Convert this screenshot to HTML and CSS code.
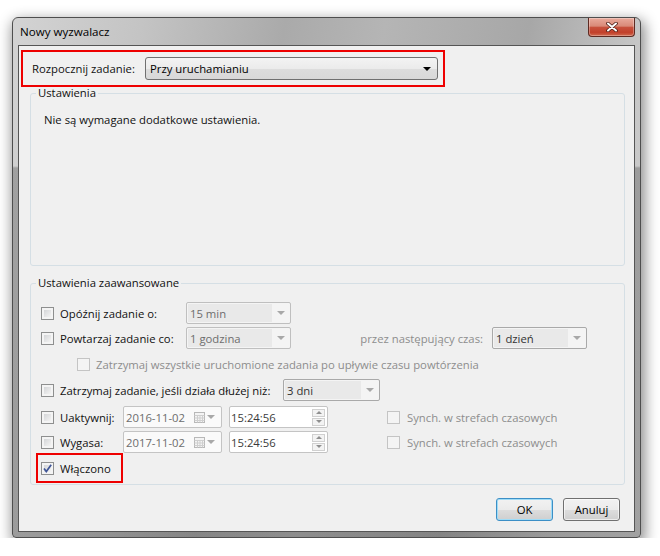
FILE: index.html
```html
<!DOCTYPE html>
<html lang="pl">
<head>
    <meta charset="UTF-8">
    <title>Nowy wyzwalacz</title>
    <link rel="stylesheet" href="styles.css">
</head>
<body>
    <div class="window">
        <div class="titlebar">
            <span class="title">Nowy wyzwalacz</span>
            <button class="close" type="button">
                <svg width="12" height="10" viewBox="0 0 12 10">
                    <path d="M2 1.5 L10 8.5 M10 1.5 L2 8.5" stroke="#4a1c14" stroke-width="3.6" stroke-linecap="round"/>
                    <path d="M2 1.5 L10 8.5 M10 1.5 L2 8.5" stroke="#ffffff" stroke-width="2" stroke-linecap="round"/>
                </svg>
            </button>
        </div>

        <div class="client">
            <div class="start mark">
                <label class="start-label">Rozpocznij zadanie:</label>
                <div class="select">
                    <span class="select-val">Przy uruchamianiu</span>
                    <span class="caret"></span>
                </div>
            </div>

            <fieldset class="group group-basic">
                <legend>Ustawienia</legend>
                <p class="note">Nie są wymagane dodatkowe ustawienia.</p>
            </fieldset>

            <fieldset class="group group-adv">
                <legend>Ustawienia zaawansowane</legend>
                <div class="rows">
                    <div class="row">
                        <span class="cb"></span>
                        <span class="lbl w126">Opóźnij zadanie o:</span>
                        <div class="combo w105"><span class="val">15 min</span><span class="drop"></span></div>
                    </div>
                    <div class="row gap3">
                        <span class="cb"></span>
                        <span class="lbl w126">Powtarzaj zadanie co:</span>
                        <div class="combo w105"><span class="val">1 godzina</span><span class="drop"></span></div>
                        <span class="side off">przez następujący czas:</span>
                        <div class="combo w95 dark"><span class="val">1 dzień</span><span class="drop"></span></div>
                    </div>
                    <div class="row sub gap5">
                        <span class="cb off"></span>
                        <span class="lbl off">Zatrzymaj wszystkie uruchomione zadania po upływie czasu powtórzenia</span>
                    </div>
                    <div class="row gap5">
                        <span class="cb"></span>
                        <span class="lbl w223">Zatrzymaj zadanie, jeśli działa dłużej niż:</span>
                        <div class="combo w97 dark"><span class="val">3 dni</span><span class="drop"></span></div>
                    </div>
                    <div class="row gap5">
                        <span class="cb"></span>
                        <span class="lbl w63">Uaktywnij:</span>
                        <div class="date">
                            <span class="date-val">2016-11-02</span>
                            <svg class="cal" width="11" height="11" viewBox="0 0 11 11">
                                <rect x="0.5" y="0.5" width="10" height="10" fill="#f4f4f4" stroke="#b8b8b8"/>
                                <path d="M0.5 3.5 H10.5 M0.5 6 H10.5 M0.5 8.5 H10.5 M3.5 3.5 V10.5 M6 3.5 V10.5 M8.5 3.5 V10.5" stroke="#cfcfcf"/>
                            </svg>
                            <span class="drop"></span>
                        </div>
                        <div class="time">
                            <span class="time-val">15:24:56</span>
                            <span class="spin"><span class="up"></span><span class="down"></span></span>
                        </div>
                        <span class="cb off sync"></span>
                        <span class="lbl off">Synch. w strefach czasowych</span>
                    </div>
                    <div class="row gap3">
                        <span class="cb"></span>
                        <span class="lbl w63">Wygasa:</span>
                        <div class="date">
                            <span class="date-val">2017-11-02</span>
                            <svg class="cal" width="11" height="11" viewBox="0 0 11 11">
                                <rect x="0.5" y="0.5" width="10" height="10" fill="#f4f4f4" stroke="#b8b8b8"/>
                                <path d="M0.5 3.5 H10.5 M0.5 6 H10.5 M0.5 8.5 H10.5 M3.5 3.5 V10.5 M6 3.5 V10.5 M8.5 3.5 V10.5" stroke="#cfcfcf"/>
                            </svg>
                            <span class="drop"></span>
                        </div>
                        <div class="time">
                            <span class="time-val">15:24:56</span>
                            <span class="spin"><span class="up"></span><span class="down"></span></span>
                        </div>
                        <span class="cb off sync"></span>
                        <span class="lbl off">Synch. w strefach czasowych</span>
                    </div>
                    <div class="row enabled mark">
                        <span class="cb checked">
                            <svg width="11" height="11" viewBox="0 0 11 11">
                                <path d="M2 5.5 L4.3 8.6 L9.2 1.8" fill="none" stroke="#3f5596" stroke-width="1.7"/>
                            </svg>
                        </span>
                        <span class="lbl">Włączono</span>
                    </div>
                </div>
            </fieldset>

            <div class="buttons">
                <button class="btn btn-default" type="button">OK</button>
                <button class="btn" type="button">Anuluj</button>
            </div>
        </div>
    </div>
</body>
</html>
```

FILE: styles.css
```css
body {
    margin: 0;
    background: #ffffff;
    font-family: 'Open Sans', 'Noto Sans', sans-serif;
    font-size: 11.3px;
    color: #111;
}
.window {
    box-sizing: border-box;
    width: 629px;
    height: 521px;
    margin: 17px 0 0 12px;
    padding: 0 5px 5px;
    border: 1px solid #4e4e4e;
    border-radius: 6px 6px 4px 4px;
    display: flex;
    flex-direction: column;
    background:
        linear-gradient(180deg, rgba(0, 0, 0, 0) 148px, rgba(40, 40, 40, 0.28) 150px),
        linear-gradient(100deg, #d3d3d3 0%, #c4c4c4 18%, #aaaaaa 38%, #b5b5b5 52%, #a7a7a7 72%, #c7c7c7 88%, #d0d0d0 100%);
    box-shadow: 2px 5px 14px 2px rgba(0, 0, 0, 0.45);
}
.titlebar {
    height: 27px;
    display: flex;
    align-items: center;
    padding-left: 2px;
}
.title {
    flex: 1;
    font-size: 11.6px;
    color: #000;
}
.close {
    align-self: flex-start;
    width: 47px;
    height: 19px;
    padding: 0;
    border: 1px solid #5e2a22;
    border-top: none;
    border-radius: 0 0 4px 4px;
    background: linear-gradient(180deg, #e9aa9c 0%, #d98a78 45%, #c7513c 52%, #c2402b 80%, #d06a4f 100%);
    box-shadow: inset 0 0 0 1px rgba(255, 255, 255, 0.3);
    display: flex;
    align-items: center;
    justify-content: center;
}
.client {
    flex: 1;
    border: 1px solid #555;
    background: #f0f0f0;
    display: flex;
    flex-direction: column;
}
.mark {
    border: 2px solid #ee0000;
    box-sizing: border-box;
}
.start {
    width: 424px;
    height: 37px;
    margin: 4px 0 0 2px;
    padding-left: 9px;
    display: flex;
    align-items: center;
}
.start-label {
    width: 113px;
}
.select {
    box-sizing: border-box;
    width: 293px;
    height: 23px;
    border: 1px solid #707070;
    border-radius: 3px;
    background: linear-gradient(180deg, #f3f3f3 0%, #ebebeb 50%, #dddddd 51%, #d8d8d8 100%);
    display: flex;
    align-items: center;
    padding-left: 4px;
    color: #000;
}
.select-val {
    flex: 1;
}
.caret {
    width: 0;
    height: 0;
    margin-right: 6px;
    border-left: 4px solid transparent;
    border-right: 4px solid transparent;
    border-top: 4px solid #000;
}
.group {
    box-sizing: border-box;
    min-width: 0;
    margin: 0 9px 0 11px;
    padding: 13px 0 0 5px;
    border: 1px solid #d5dfe5;
    border-radius: 3px;
}
.group legend {
    padding: 0 2px;
    line-height: 12px;
}
.group-basic {
    height: 179px;
}
.group-adv {
    height: 208px;
    margin-top: 11px;
}
.note {
    margin: 0 0 0 8px;
    line-height: 15px;
}
.rows {
    padding-left: 5px;
}
.row {
    display: flex;
    align-items: center;
    height: 22px;
}
.gap3 {
    margin-top: 3px;
}
.gap5 {
    margin-top: 5px;
}
.sub {
    height: 20px;
    padding-left: 36px;
}
.cb {
    box-sizing: border-box;
    width: 13px;
    height: 13px;
    flex: none;
    margin-right: 6px;
    border: 1px solid #8e8f8f;
    background: linear-gradient(135deg, #cbcdd0 0%, #eeeeee 70%, #f8f8f8 100%);
    box-shadow: inset 0 0 0 2px #f4f4f4;
    display: flex;
    align-items: center;
    justify-content: center;
}
.cb.off {
    border-color: #c4c4c4;
    background: #f4f4f4;
    box-shadow: none;
}
.cb.sync {
    margin-left: 59px;
    margin-right: 7px;
}
.lbl {
    white-space: nowrap;
    flex: none;
}
.off {
    color: #8d8d8d;
}
.w126 { width: 126px; }
.w223 { width: 223px; }
.w63 { width: 63px; }
.combo {
    box-sizing: border-box;
    height: 22px;
    border: 1px solid #bfbfbf;
    border-radius: 2px;
    background: #f4f4f4;
    display: flex;
    align-items: stretch;
    padding: 1px;
    color: #6d6d6d;
    flex: none;
}
.combo.dark {
    border-color: #a9a9a9;
    color: #333;
}
.w105 { width: 105px; }
.w97 { width: 97px; }
.w95 { width: 95px; margin-left: 9px; }
.val {
    flex: 1;
    background: #e9e9e9;
    padding-left: 2px;
    display: flex;
    align-items: center;
}
.drop {
    width: 17px;
    display: flex;
    align-items: center;
    justify-content: center;
}
.drop::after {
    content: "";
    border-left: 4px solid transparent;
    border-right: 4px solid transparent;
    border-top: 4px solid #a8a8a8;
}
.side {
    width: 192px;
    text-align: right;
    flex: none;
}
.date, .time {
    box-sizing: border-box;
    width: 99px;
    height: 22px;
    border: 1px solid #c4c4c4;
    border-radius: 2px;
    background: #fafafa;
    display: flex;
    align-items: center;
    flex: none;
}
.date {
    margin-right: 7px;
    color: #6d6d6d;
    padding-left: 2px;
}
.date-val {
    flex: 1;
}
.date .drop {
    width: 12px;
    margin-right: 4px;
}
.time {
    background: #fff;
    color: #3a3a3a;
    padding-left: 1px;
}
.time-val {
    flex: 1;
}
.spin {
    display: flex;
    flex-direction: column;
    gap: 1px;
    margin-right: 2px;
}
.up, .down {
    box-sizing: border-box;
    width: 13px;
    height: 8px;
    border: 1px solid #d0d0d0;
    background: #f3f3f3;
    display: flex;
    align-items: center;
    justify-content: center;
}
.up::after, .down::after {
    content: "";
    border-left: 3px solid transparent;
    border-right: 3px solid transparent;
}
.up::after {
    border-bottom: 3px solid #8f8f8f;
}
.down::after {
    border-top: 3px solid #8f8f8f;
}
.enabled {
    width: 87px;
    height: 30px;
    margin-left: -5px;
    padding-left: 3px;
}
.buttons {
    display: flex;
    justify-content: flex-end;
    gap: 10px;
    margin-top: 13px;
    padding-right: 14px;
}
.btn {
    box-sizing: border-box;
    width: 57px;
    height: 23px;
    padding: 0;
    font: inherit;
    color: #000;
    border: 1px solid #707070;
    border-radius: 3px;
    background: linear-gradient(180deg, #f2f2f2 0%, #ebebeb 50%, #dddddd 51%, #cfcfcf 100%);
    box-shadow: inset 0 0 0 1px rgba(255, 255, 255, 0.6);
}
.btn-default {
    border-color: #3c8fc6;
    box-shadow: inset 0 0 0 1px #9fdcf7;
}
```
